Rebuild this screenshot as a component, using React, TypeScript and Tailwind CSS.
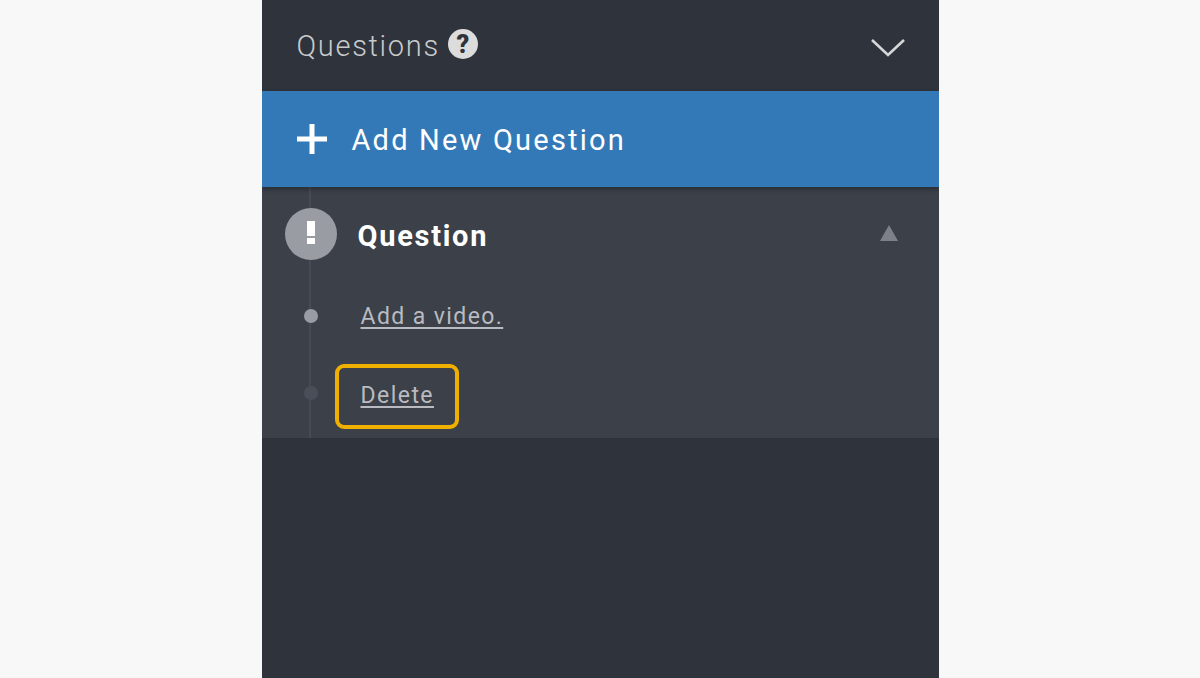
function HelpIcon() {
  return (
    <span className="ml-[8px] flex h-[30px] w-[30px] items-center justify-center rounded-full bg-[#dcdcdd] text-[25px] leading-none font-black text-[#2f333b]">
      ?
    </span>
  );
}

function Dot({ dim = false }: { dim?: boolean }) {
  return (
    <span
      className={`h-[14px] w-[14px] shrink-0 rounded-full ${
        dim ? "bg-[#4a4e58]" : "bg-[#9a9ca3]"
      }`}
    />
  );
}

export default function App() {
  return (
    <div className="flex h-[678px] justify-center overflow-hidden bg-[#f8f8f8] font-['Roboto',sans-serif]">
      <div className="flex w-[677px] flex-col overflow-hidden bg-[#2f333b]">
        <div className="flex h-[91px] shrink-0 items-center justify-between pl-[35px] pr-[33px] pb-[3px]">
          <div className="flex items-center">
            <span className="pt-[6px] text-[29px] font-light tracking-[1.7px] text-[#c9cacc]">
              Questions
            </span>
            <HelpIcon />
          </div>
          <svg className="mt-[7px]" width="36" height="22" viewBox="0 0 36 22" fill="none">
            <path d="M2 3 L18 18 L34 3" stroke="#d6d7d9" strokeWidth="2.6" />
          </svg>
        </div>

        <div className="relative z-10 flex h-[96px] shrink-0 items-center bg-[#3379b7] pl-[34px] shadow-[0_2px_5px_rgba(0,0,0,0.35)]">
          <svg width="32" height="32" viewBox="0 0 32 32" fill="white">
            <rect x="1" y="13.5" width="30" height="5" />
            <rect x="13.5" y="1" width="5" height="30" />
          </svg>
          <span className="ml-[24px] pt-[4px] text-[29px] tracking-[2.2px] text-white">
            Add New Question
          </span>
        </div>

        <div className="relative h-[251px] shrink-0 bg-[#3b4049]">
          <span className="absolute left-[47px] top-0 h-full w-[2px] bg-[#474b55]" />

          <div className="relative flex h-[95px] items-center justify-between pl-[23px] pr-[41px]">
            <div className="flex items-center">
              <span className="mb-[2px] flex h-[52px] w-[52px] flex-col items-center justify-center gap-[2px] rounded-full bg-[#9a9ca3] pb-[2px]">
                <span className="h-[15px] w-[8px] bg-white" />
                <span className="h-[6px] w-[8px] bg-white" />
              </span>
              <span className="ml-[21px] pt-[4px] text-[29px] font-bold tracking-[1.72px] text-white">
                Question
              </span>
            </div>
            <svg className="mb-[4px]" width="18" height="16" viewBox="0 0 18 16" fill="#7e8089">
              <polygon points="9,0 18,16 0,16" />
            </svg>
          </div>

          <div className="relative flex h-[66px] items-center pl-[42px]">
            <span className="mt-[2px] flex">
              <Dot />
            </span>
            <a className="ml-[43px] pt-[4px] text-[23px] tracking-[1.4px] text-[#b9bbc0] underline decoration-2 underline-offset-[3px]">
              Add a video.
            </a>
          </div>

          <div className="relative mt-[16px] flex h-[65px] items-center">
            <span className="mb-[7px] ml-[42px] flex">
              <Dot dim />
            </span>
            <div className="ml-[17px] flex h-[65px] w-[124px] items-center rounded-[9px] border-[4px] border-[#f0b000] pl-[22px]">
              <a className="text-[23px] tracking-[1.45px] text-[#b9bbc0] underline decoration-2 underline-offset-[3px]">
                Delete
              </a>
            </div>
          </div>
        </div>
      </div>
    </div>
  );
}
